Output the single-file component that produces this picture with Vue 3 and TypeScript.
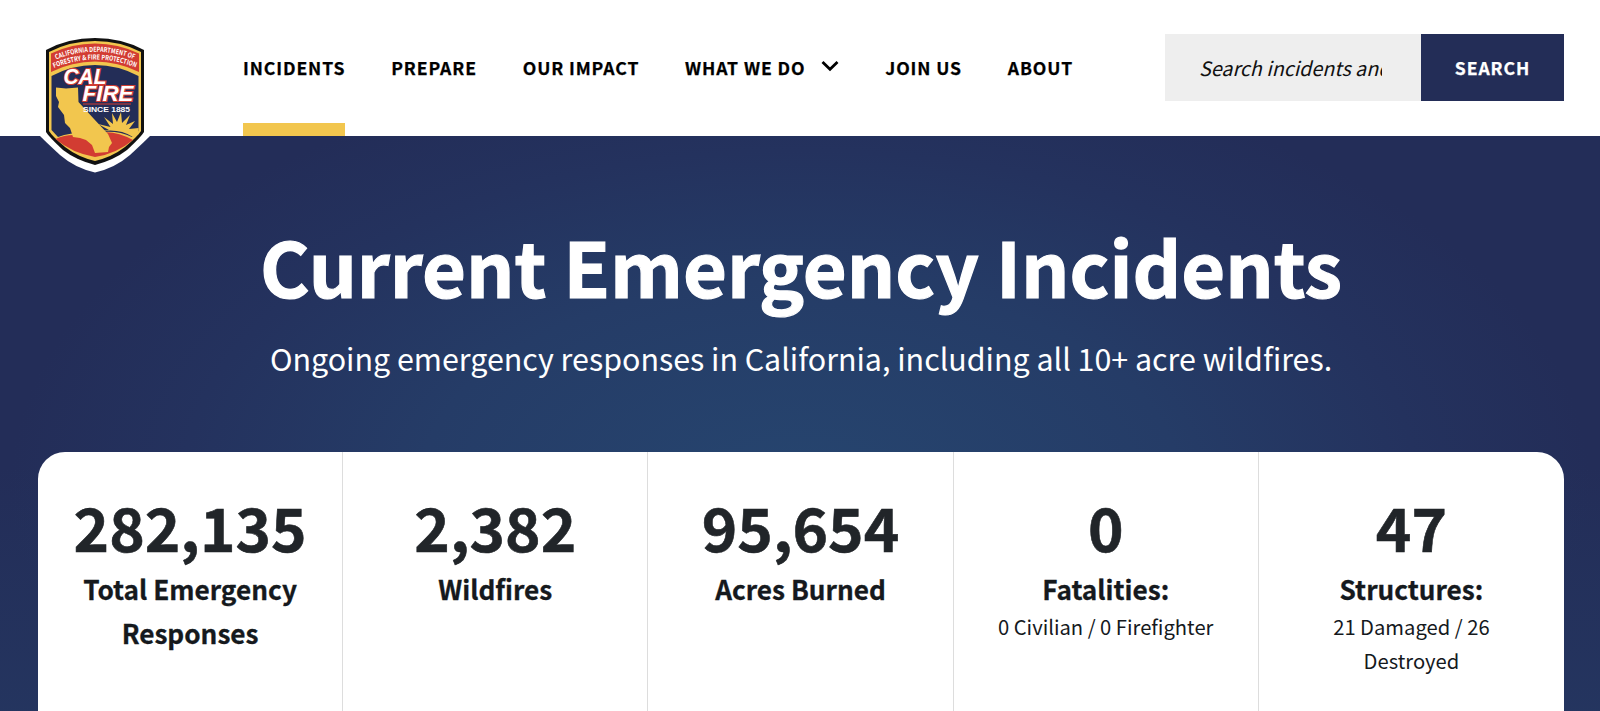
<template>
  <div class="page">
    <header class="site-header">
      <a class="logo" href="#" aria-label="CAL FIRE home">
        <svg width="118" height="146" viewBox="0 0 118 146">
          <!-- Shield -->
          <path class="shield-halo" d="M4 16 Q30 0 59 0 Q88 0 114 16 V103 Q107 110 94 122 Q79 135 59 139.500 Q39 135 24 122 Q11 110 4 103Z" />
          <path class="shield-black" d="M10 17 Q32 5 59 5 Q86 5 108 17 V99 Q105 104 91 117 Q78 127 59 132 Q40 127 27 117 Q13 104 10 99Z" />
          <path class="shield-gold" d="M13 19 Q34 8 59 8 Q84 8 105 19 V98 Q102 103 89 114 Q76 124 59 128 Q42 124 29 114 Q16 103 13 98Z" />
          <path class="shield-red" d="M15 20.500 Q36 10.500 59 10.500 Q82 10.500 103 20.500 V39 Q82 28.500 59 28.500 Q36 28.500 15 39Z" />
          <path class="shield-navy" d="M15.5 43 Q36 32 59 32 Q82 32 102.5 43 V98 L96 104 Q80 96 59 100 Q38 98 22 104 L15.5 97Z" />
          <path class="shield-red" d="M19.500 106 Q34 99 52 104 Q72 93 97 107 Q80 121 59 124 Q36 120 19.500 106Z" />
          <!-- Sun -->
          <path class="shield-gold" d="M64 98 L73 97 L62 91 L74.500 94 L68 84 L77 91 L76 80 L81 89 L85 79 L86 90 L94 82 L90 92 L99 88 L93 96 L102.500 95 V99 L97 104 Q84 96 68 98Z" />
          <!-- State outline -->
          <path class="state" d="M20 54.500 L30 55.500 L42 54.500 L42.500 69 L58 86 L72 101 L76 110 L73 114 L72 119 L59 120 L56 112 L50 107 L44 105 L37 104 L34 95 L29 90 L28 82 L22 74 L23 69 L20 63Z" />
          <path id="arc-top" class="guide" d="M20 26.500 Q59 11 99 26.500" />
          <path id="arc-bottom" class="guide" d="M18 35 Q59 18 101 35" />
          <text class="arc-text"><textPath href="#arc-top" textLength="80" lengthAdjust="spacingAndGlyphs">CALIFORNIA DEPARTMENT OF</textPath></text>
          <text class="arc-text"><textPath href="#arc-bottom" textLength="84" lengthAdjust="spacingAndGlyphs">FORESTRY &amp; FIRE PROTECTION</textPath></text>
          <text class="brand" x="27.500" y="51" textLength="43" lengthAdjust="spacingAndGlyphs">CAL</text>
          <text class="brand" x="46.500" y="67.500" textLength="51" lengthAdjust="spacingAndGlyphs">FIRE</text>
          <path class="rule" d="M47 71 H95" />
          <text class="since" x="47" y="79" textLength="47" lengthAdjust="spacingAndGlyphs">SINCE 1885</text>
        </svg>
      </a>

      <nav class="main-nav">
        <a
          v-for="item in navItems"
          :key="item.label"
          href="#"
          class="nav-link"
          :class="{ active: item.active }"
        >
          {{ item.label }}
          <svg v-if="item.hasMenu" class="chevron" width="18" height="12" viewBox="0 0 18 12">
            <path d="M1.500 2 L9 9.200 L16.500 2" />
          </svg>
        </a>
      </nav>

      <form class="search" @submit.prevent>
        <input v-model="query" class="search-input" type="text" placeholder="Search incidents and more" />
        <button class="search-button" type="submit">SEARCH</button>
      </form>
    </header>

    <main class="hero">
      <h1 class="hero-title">Current Emergency Incidents</h1>
      <p class="hero-subtitle">Ongoing emergency responses in California, including all 10+ acre wildfires.</p>

      <section class="stats">
        <div v-for="stat in stats" :key="stat.label" class="stat">
          <div class="stat-value">{{ stat.value }}</div>
          <div class="stat-label">{{ stat.label }}</div>
          <div v-if="stat.detail" class="stat-detail">{{ stat.detail }}</div>
        </div>
      </section>
    </main>
  </div>
</template>

<script setup lang="ts">
import { ref } from 'vue'

interface NavItem {
  label: string
  active?: boolean
  hasMenu?: boolean
}

interface Stat {
  value: string
  label: string
  detail?: string
}

const query = ref('')

const navItems: NavItem[] = [
  { label: 'INCIDENTS', active: true },
  { label: 'PREPARE' },
  { label: 'OUR IMPACT' },
  { label: 'WHAT WE DO', hasMenu: true },
  { label: 'JOIN US' },
  { label: 'ABOUT' },
]

const stats: Stat[] = [
  { value: '282,135', label: 'Total Emergency Responses' },
  { value: '2,382', label: 'Wildfires' },
  { value: '95,654', label: 'Acres Burned' },
  { value: '0', label: 'Fatalities:', detail: '0 Civilian / 0 Firefighter' },
  { value: '47', label: 'Structures:', detail: '21 Damaged / 26 Destroyed' },
]
</script>

<style>
body {
  margin: 0;
}
</style>

<style scoped>
.page {
  height: 711px;
  overflow: hidden;
  display: flex;
  flex-direction: column;
  font-family: 'Noto Sans CJK SC', 'Open Sans', sans-serif;
  color: #212529;
}

.site-header {
  height: 136px;
  flex-shrink: 0;
  box-sizing: border-box;
  display: flex;
  padding: 0 36px;
  background: #fff;
}

/* Logo hangs below the header */
.logo {
  position: relative;
  z-index: 2;
  width: 118px;
  height: 146px;
  margin-top: 33px;
  flex-shrink: 0;
}

.logo svg {
  display: block;
}

.shield-halo {
  fill: #fff;
}

.shield-black {
  fill: #111;
}

.shield-gold,
.state {
  fill: #f2c64e;
}

.shield-red {
  fill: #d23c32;
}

.shield-navy {
  fill: #232d57;
}

.guide {
  fill: none;
}

.arc-text {
  font-size: 6.8px;
  font-weight: 700;
  fill: #fff;
}

.brand {
  font-family: 'Liberation Sans', sans-serif;
  font-size: 21.5px;
  font-weight: 700;
  font-style: italic;
  fill: #fff;
  stroke: #d23c32;
  stroke-width: 2px;
  paint-order: stroke;
}

.rule {
  stroke: #d23c32;
  stroke-width: 1;
}

.since {
  font-family: 'Liberation Sans', sans-serif;
  font-size: 7.8px;
  font-weight: 700;
  fill: #fff;
}

.main-nav {
  display: flex;
  gap: 45.8px;
  margin-left: 89px;
}

.nav-link {
  display: flex;
  align-items: center;
  box-sizing: border-box;
  height: 136px;
  padding-bottom: 1px;
  border-top: 12px solid transparent;
  border-bottom: 13px solid transparent;
  color: #000;
  font-size: 17.6px;
  font-weight: 700;
  letter-spacing: 0.9px;
  white-space: nowrap;
  text-decoration: none;
  -webkit-text-stroke: 0.25px #000;
}

.nav-link.active {
  border-bottom-color: #f2c64e;
}

.chevron {
  margin: 0 0 3px 16px;
  fill: none;
  stroke: #000;
  stroke-width: 2.8;
}

.search {
  display: flex;
  height: 67px;
  margin: 34px 0 0 auto;
}

.search-input {
  box-sizing: border-box;
  width: 256px;
  padding: 0 39px 1px 34px;
  border: 0;
  border-radius: 0;
  background: #eee;
  font-family: inherit;
  font-size: 19.7px;
  font-style: italic;
}

.search-input::placeholder {
  color: #111;
  opacity: 1;
}

.search-button {
  width: 143px;
  padding: 0 0 1px;
  border: 0;
  background: #232d57;
  color: #fff;
  font-family: inherit;
  font-size: 17.6px;
  font-weight: 700;
  letter-spacing: 0.9px;
  -webkit-text-stroke: 0.25px #fff;
}

.hero {
  flex: 1;
  padding: 0 36px 0 38px;
  background:
    linear-gradient(to bottom, transparent 330px, rgba(37, 58, 100, 0.6) 575px),
    radial-gradient(ellipse 790px 430px at 50% 350px, #26456f 0%, #253c67 48%, #24325e 78%, #232d58 100%);
  text-align: center;
}

.hero-title {
  margin: 0;
  padding-top: 79px;
  color: #fff;
  font-size: 75.7px;
  font-weight: 700;
  line-height: 100px;
  -webkit-text-stroke: 1.2px #fff;
}

.hero-subtitle {
  margin: 0;
  padding-top: 19px;
  color: #fff;
  font-size: 30.4px;
  line-height: 48px;
}

.stats {
  display: grid;
  grid-template-columns: repeat(5, 1fr);
  height: 300px;
  margin-top: 70px;
  border-radius: 27px 27px 0 0;
  background: #fff;
}

.stat {
  padding: 37px 30px 0;
  border-right: 1px solid #ddd;
}

.stat:last-child {
  border-right: 0;
}

.stat-value {
  font-size: 60.3px;
  font-weight: 700;
  line-height: 73px;
  -webkit-text-stroke: 0.6px #212529;
}

.stat-label {
  padding-top: 5px;
  color: #15191d;
  font-size: 26.2px;
  font-weight: 700;
  line-height: 44px;
  -webkit-text-stroke: 0.3px #15191d;
}

.stat-detail {
  margin-top: -1px;
  color: #15191d;
  font-size: 20.2px;
  line-height: 34px;
}
</style>
